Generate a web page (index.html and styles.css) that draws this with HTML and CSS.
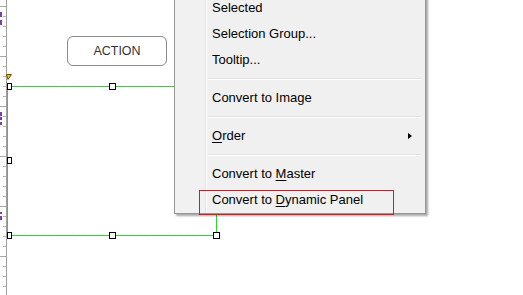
FILE: index.html
```html
<!DOCTYPE html>
<html lang="en">

<head>
    <meta charset="UTF-8">
    <meta name="viewport" content="width=device-width, initial-scale=1.0">
    <title>Convert to Dynamic Panel</title>
    <link rel="stylesheet" href="styles.css">
</head>

<body>
    <div class="stage">
        <div class="ruler">
            <span class="num num-1"></span>
            <span class="num num-2"></span>
            <span class="num num-3"></span>
            <span class="num num-4"></span>
            <span class="num num-5"></span>
            <span class="num num-6"></span>
            <span class="num num-7"></span>
            <svg class="marker" width="6" height="6" viewBox="0 0 6 6">
                <polygon points="0.5,0.5 5.5,0.5 2,5.5" fill="#f5c400" stroke="#6b5200" stroke-width="1" />
            </svg>
        </div>

        <div class="canvas">
            <div class="widget action-btn">ACTION</div>

            <!-- selection box of the dragged widget -->
            <div class="sel-line sel-top"></div>
            <div class="sel-line sel-left"></div>
            <div class="sel-line sel-bottom"></div>
            <div class="sel-line sel-right"></div>

            <div class="handle edge h-tl"></div>
            <div class="handle h-tm"></div>
            <div class="handle edge h-ml"></div>
            <div class="handle edge h-bl"></div>
            <div class="handle h-bm"></div>
            <div class="handle h-br"></div>
        </div>

        <div class="menu">
            <div class="menu-item">Selected</div>
            <div class="menu-item">Selection Group...</div>
            <div class="menu-item">Tooltip...</div>
            <div class="menu-sep"></div>
            <div class="menu-item">Convert to Image</div>
            <div class="menu-sep"></div>
            <div class="menu-item has-sub"><span><u>O</u>rder</span><i class="arrow"></i></div>
            <div class="menu-sep"></div>
            <div class="menu-item">Convert to <u>M</u>aster</div>
            <div class="menu-item">Convert to <u>D</u>ynamic Panel</div>
        </div>

        <div class="highlight-box"></div>
    </div>
</body>

</html>
```

FILE: styles.css
```css
* {
    box-sizing: border-box;
}

body {
    margin: 0;
    background: #fff;
    font-family: "Liberation Sans", Arial, sans-serif;
}

.stage {
    position: relative;
    width: 523px;
    height: 295px;
    overflow: hidden;
    display: flex;
}

/* vertical ruler on the left */
.ruler {
    position: relative;
    width: 7px;
    height: 100%;
    flex-shrink: 0;
    border-right: 1px solid #a0a0a0;
    background:
        repeating-linear-gradient(to bottom, transparent 0 6px, #a8a8a8 6px 7px, transparent 7px 50px),
        repeating-linear-gradient(to bottom, transparent 0 6px, #b4b4b4 6px 7px, transparent 7px 10px);
    background-size: 6px 100%, 3px 100%;
    background-position: 0 0, 3px 0;
    background-repeat: no-repeat;
}

.num {
    position: absolute;
    left: 0;
    width: 2px;
    background: #7a3ea8;
}

.num-1 { top: 12px; height: 5px; }
.num-2 { top: 20px; height: 5px; }
.num-3 { top: 112px; height: 4px; }
.num-4 { top: 117px; height: 3px; }
.num-5 { top: 122px; height: 3px; }
.num-6 { top: 212px; height: 2px; }
.num-7 { top: 216px; height: 4px; }

.marker {
    position: absolute;
    left: 6px;
    top: 74px;
}

.canvas {
    position: relative;
    flex: 1;
}

.action-btn {
    position: absolute;
    left: 60px;
    top: 36px;
    width: 100px;
    height: 30px;
    border: 1px solid #8a8a8a;
    border-radius: 6px;
    background: #fff;
    color: #333;
    font-size: 12.5px;
    display: flex;
    align-items: center;
    justify-content: center;
}

.sel-line {
    position: absolute;
}

.sel-top,
.sel-bottom {
    height: 1px;
    background: repeating-linear-gradient(to right, #20e020 0 5px, #7c9a7c 5px 6px);
}

.sel-left,
.sel-right {
    width: 1px;
    background: repeating-linear-gradient(to bottom, #20e020 0 5px, #7c9a7c 5px 6px);
}

.sel-top { left: 0; top: 86px; width: 210px; }
.sel-bottom { left: 0; top: 235px; width: 210px; }
.sel-left { left: 0; top: 86px; height: 150px; }
.sel-right { left: 209px; top: 86px; height: 150px; }

.handle {
    position: absolute;
    width: 7px;
    height: 7px;
    border: 1px solid #000;
    background: #fff;
}

.handle.edge {
    width: 5px;
}

.h-tl { left: 0; top: 83px; }
.h-tm { left: 102px; top: 83px; }
.h-ml { left: 0; top: 157px; }
.h-bl { left: 0; top: 232px; }
.h-bm { left: 102px; top: 232px; }
.h-br { left: 206px; top: 232px; }

/* context menu */
.menu {
    position: absolute;
    left: 174px;
    top: -7px;
    width: 252px;
    padding: 1px 0 0;
    border: 1px solid #979797;
    background: linear-gradient(to right, #f1f1f1 0 30px, #e2e3e3 30px 31px, #fff 31px 32px, #f0f0f0 32px);
    box-shadow: 2px 2px 2px rgba(0, 0, 0, 0.35);
    font-size: 13px;
    color: #000;
}

.menu-item {
    height: 26px;
    line-height: 26px;
    padding: 0 13px 0 37px;
    white-space: nowrap;
}

.menu-item.has-sub {
    display: flex;
    align-items: center;
    justify-content: space-between;
}

.menu-item u {
    text-underline-offset: 2px;
}

.arrow {
    width: 0;
    height: 0;
    border-left: 4px solid #000;
    border-top: 3px solid transparent;
    border-bottom: 3px solid transparent;
}

.menu-sep {
    height: 12px;
    margin: 0 4px 0 33px;
    background: linear-gradient(to bottom, transparent 0 5px, #e0e0e0 5px 6px, #fff 6px 7px, transparent 7px);
}

.highlight-box {
    position: absolute;
    left: 199px;
    top: 190px;
    width: 195px;
    height: 25px;
    border: 1px solid #e8141a;
}
```
